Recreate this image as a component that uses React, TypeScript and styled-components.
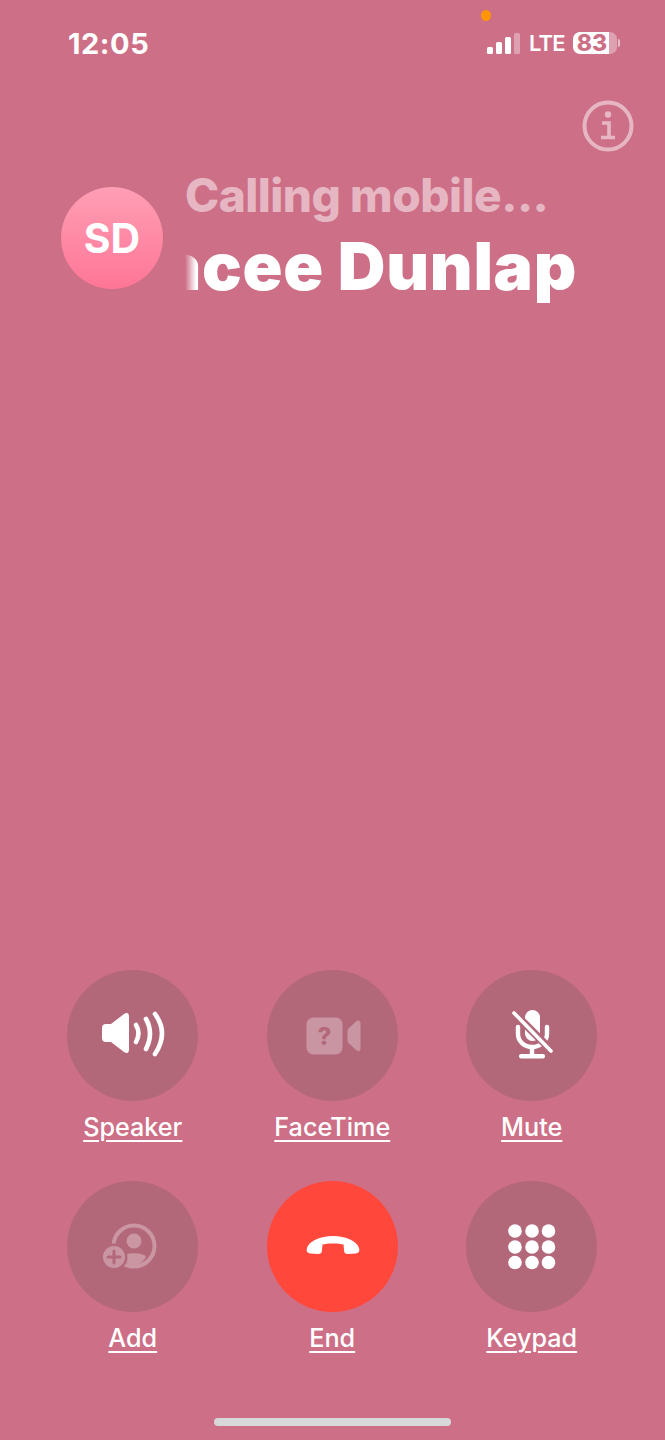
import React from "react";
import styled, { createGlobalStyle } from "styled-components";

const Global = createGlobalStyle`
  html, body { margin: 0; padding: 0; background: #cd6f87; }
  * { box-sizing: border-box; }
`;

const Page = styled.main`
  position: relative;
  width: 665px;
  height: 1440px;
  display: flex;
  flex-direction: column;
  background: #cd6f87;
  color: #fff;
  font-family: Inter, "Liberation Sans", sans-serif;
  overflow: hidden;
`;

const StatusBar = styled.header`
  height: 88px;
  padding: 29px 48px 0 68px;
  display: flex;
  justify-content: space-between;
  align-items: flex-start;
`;

const Clock = styled.span`
  font-size: 29px;
  line-height: 30px;
  font-weight: 700;
  letter-spacing: 0.55px;
`;

const StatusGroup = styled.div`
  display: flex;
  align-items: center;
  height: 30px;
  margin-top: -1px;
`;

const Signal = styled.svg`
  display: block;
  width: 33px;
  height: 21px;
  margin-right: 9px;
  margin-top: 1px;
`;

const Network = styled.span`
  font-size: 22px;
  line-height: 30px;
  font-weight: 600;
  width: 44px;
  letter-spacing: -0.8px;
`;

const Battery = styled.div`
  position: relative;
  width: 44px;
  height: 22px;
  border-radius: 7px;
  background: linear-gradient(to right, #fff 0 36px, rgba(255, 255, 255, 0.35) 36px);
  color: #cd6f87;
  font-size: 23px;
  line-height: 22px;
  font-weight: 800;
  text-align: center;
  padding-right: 6px;
  &::after {
    content: "";
    position: absolute;
    right: -3px;
    top: 7px;
    width: 2px;
    height: 8px;
    border-radius: 0 2px 2px 0;
    background: rgba(255, 255, 255, 0.55);
  }
`;

const PrivacyDot = styled.span`
  position: absolute;
  left: 481px;
  top: 10px;
  width: 10px;
  height: 11px;
  border-radius: 50%;
  background: #ff9500;
`;

const InfoRow = styled.div`
  height: 99px;
  padding: 12px 31px 0 0;
  display: flex;
  justify-content: flex-end;
  align-items: flex-start;
`;

const InfoIcon = styled.svg`
  display: block;
  width: 52px;
  height: 52px;
`;

const CallHeader = styled.section`
  display: flex;
  align-items: flex-start;
  padding-left: 61px;
  gap: 22px;
`;

const Avatar = styled.div`
  flex: none;
  width: 102px;
  height: 102px;
  border-radius: 50%;
  background: linear-gradient(to bottom, #ff9fb5, #ff7596);
  display: flex;
  align-items: center;
  justify-content: center;
  font-size: 41px;
  font-weight: 700;
`;

const CallText = styled.div`
  width: 392px;
  margin-top: -20px;
  display: flex;
  flex-direction: column;
`;

const Status = styled.div`
  font-size: 46px;
  line-height: 56px;
  font-weight: 800;
  letter-spacing: -0.5px;
  color: rgba(255, 255, 255, 0.5);
  white-space: nowrap;
`;

const NameClip = styled.div`
  margin-top: 5px;
  height: 80px;
  overflow: hidden;
  display: flex;
  justify-content: flex-end;
  mask-image: linear-gradient(to right, transparent 0, #000 11px);
`;

const Name = styled.span`
  flex: none;
  font-size: 66px;
  line-height: 76px;
  font-weight: 900;
  letter-spacing: 0.7px;
  white-space: nowrap;
`;

const Spacer = styled.div`
  flex: 1;
`;

const Controls = styled.section`
  display: grid;
  grid-template-columns: repeat(3, 199.5px);
  grid-auto-rows: 211px;
  padding-left: 33px;
  margin-bottom: 26px;
`;

const Control = styled.div`
  display: flex;
  flex-direction: column;
  align-items: center;
`;

const Round = styled.div<{ $end?: boolean }>`
  width: 131px;
  height: 131px;
  border-radius: 50%;
  display: flex;
  align-items: center;
  justify-content: center;
  background: ${(p) => (p.$end ? "#ff483b" : "#b3687a")};
`;

const Label = styled.span`
  margin-top: 9px;
  font-size: 25.2px;
  line-height: 34px;
  font-weight: 500;
  text-decoration: underline;
  text-decoration-thickness: 2px;
  text-underline-offset: 4px;
`;

const HomeBar = styled.div`
  width: 237px;
  height: 8px;
  margin: 0 auto 14px;
  border-radius: 4px;
  background: #d8d8d8;
`;

const SpeakerIcon = () => (
  <svg width="66" height="46" viewBox="0 0 66 46" style={{ display: "block", marginTop: -3 }}>
    <path d="M6 13H11L24 3Q29 0 29 6V38Q29 44 24 41L11 31H6Q2 31 2 27V17Q2 13 6 13Z" fill="#fff" />
    <g fill="none" stroke="#fff" strokeWidth="4.6" strokeLinecap="round">
      <path d="M36 14Q41 22 36 31" />
      <path d="M46 8Q54 22 46 38" />
      <path d="M55 3Q69 22 55 43" />
    </g>
  </svg>
);

const FaceTimeIcon = () => (
  <svg width="60" height="38" viewBox="0 0 60 38" style={{ display: "block" }}>
    <rect x="4.5" y="0.5" width="36" height="37" rx="7" fill="#fff" opacity="0.3" />
    <path d="M45.5 14Q45.5 12 47 11L54 4.5Q58.5 1.5 58.5 7V31Q58.5 36 54 33L47 26.5Q45.5 25.5 45.5 23.5Z" fill="#fff" opacity="0.3" />
    <text x="22.5" y="28" textAnchor="middle" fontFamily="Inter, sans-serif" fontSize="24" fontWeight="800" fill="#b3687a">?</text>
  </svg>
);

const MuteIcon = () => (
  <svg width="44" height="54" viewBox="0 0 44 54" style={{ display: "block", marginTop: -2 }}>
    <rect x="15" y="2" width="15" height="31" rx="7.5" fill="#fff" />
    <path d="M8 19V26C8 33 14 39 22 39C30 39 37 33 37 26V19" fill="none" stroke="#fff" strokeWidth="4.4" strokeLinecap="round" />
    <path d="M22 39V47" stroke="#fff" strokeWidth="4.4" />
    <rect x="9" y="46" width="26" height="4.5" rx="2" fill="#fff" />
    <path d="M8 9L42 43" stroke="#b3687a" strokeWidth="8" />
    <path d="M4 5L41 43" stroke="#fff" strokeWidth="3.6" strokeLinecap="round" />
  </svg>
);

const AddIcon = () => (
  <svg width="56" height="50" viewBox="0 0 56 50" style={{ display: "block", marginLeft: -8, marginTop: 2 }}>
    <g opacity="0.3" fill="#fff">
      <circle cx="33" cy="23" r="20.5" fill="none" stroke="#fff" strokeWidth="4" />
      <circle cx="33" cy="18" r="7.5" />
      <path d="M21 34C23 29 43 29 45 34C42 39 38 42 33 42C28 42 24 39 21 34Z" />
    </g>
    <circle cx="13" cy="34" r="13.5" fill="#b3687a" />
    <circle cx="13" cy="34" r="11" fill="#fff" opacity="0.3" />
    <path d="M13 28V40M7 34H19" stroke="#b3687a" strokeWidth="3" strokeLinecap="round" />
  </svg>
);

const EndIcon = () => (
  <svg width="54" height="20" viewBox="0 0 54 20" style={{ display: "block", marginTop: -3, marginLeft: 1 }}>
    <path
      d="M1 13C3 6 14 1 27 1C40 1 51 6 53 13C54 16 53 18 50 18.5L42 19C39.5 19 38 18 38 15L37.5 9.5C34 8 20 8 16.5 9.5L16 15C16 18 14.5 19 12 19L4 18.5C1 18 0 16 1 13Z"
      fill="#fff"
    />
  </svg>
);

const KeypadIcon = () => (
  <svg width="48" height="46" viewBox="0 0 48 46" style={{ display: "block" }}>
    {[7, 23, 38.5].map((cy) =>
      [7, 24, 40.5].map((cx) => <circle key={`${cx}-${cy}`} cx={cx} cy={cy} r="6.8" fill="#fff" />)
    )}
  </svg>
);

const controls = [
  { label: "Speaker", icon: <SpeakerIcon /> },
  { label: "FaceTime", icon: <FaceTimeIcon /> },
  { label: "Mute", icon: <MuteIcon /> },
  { label: "Add", icon: <AddIcon /> },
  { label: "End", icon: <EndIcon />, end: true },
  { label: "Keypad", icon: <KeypadIcon /> },
];

export default function App() {
  return (
    <Page>
      <Global />
      <PrivacyDot />
      <StatusBar>
        <Clock>12:05</Clock>
        <StatusGroup>
          <Signal viewBox="0 0 33 21">
            <rect x="0" y="14" width="6" height="7" rx="1.5" fill="#fff" />
            <rect x="9" y="9" width="6" height="12" rx="1.5" fill="#fff" />
            <rect x="18" y="4" width="6" height="17" rx="1.5" fill="#fff" />
            <rect x="27" y="0" width="6" height="21" rx="1.5" fill="#fff" opacity="0.35" />
          </Signal>
          <Network>LTE</Network>
          <Battery>83</Battery>
        </StatusGroup>
      </StatusBar>
      <InfoRow>
        <InfoIcon viewBox="0 0 52 52">
          <g fill="none" stroke="#fff" strokeOpacity="0.5">
            <circle cx="26" cy="26" r="23.5" strokeWidth="4" />
            <path d="M20 23H27V37M19 37.5H33" strokeWidth="3.6" />
          </g>
          <circle cx="26" cy="14.5" r="3.2" fill="#fff" fillOpacity="0.5" />
        </InfoIcon>
      </InfoRow>
      <CallHeader>
        <Avatar>SD</Avatar>
        <CallText>
          <Status>Calling mobile...</Status>
          <NameClip>
            <Name>Stacee Dunlap</Name>
          </NameClip>
        </CallText>
      </CallHeader>
      <Spacer />
      <Controls>
        {controls.map((c) => (
          <Control key={c.label}>
            <Round $end={c.end}>{c.icon}</Round>
            <Label>{c.label}</Label>
          </Control>
        ))}
      </Controls>
      <HomeBar />
    </Page>
  );
}
